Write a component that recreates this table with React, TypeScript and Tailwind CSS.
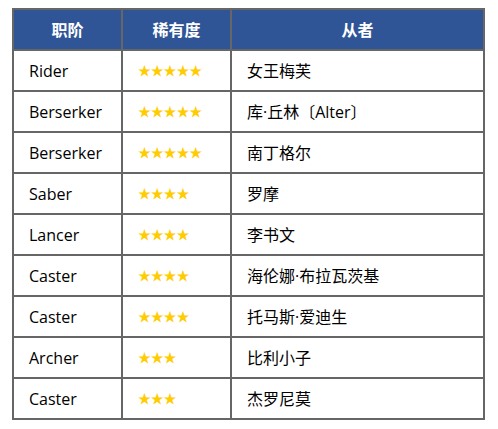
const rows = [
  { cls: 'Rider', stars: 5, name: '女王梅芙' },
  { cls: 'Berserker', stars: 5, name: '库·丘林〔Alter〕' },
  { cls: 'Berserker', stars: 5, name: '南丁格尔' },
  { cls: 'Saber', stars: 4, name: '罗摩' },
  { cls: 'Lancer', stars: 4, name: '李书文' },
  { cls: 'Caster', stars: 4, name: '海伦娜·布拉瓦茨基' },
  { cls: 'Caster', stars: 4, name: '托马斯·爱迪生' },
  { cls: 'Archer', stars: 3, name: '比利小子' },
  { cls: 'Caster', stars: 3, name: '杰罗尼莫' },
];

const font = "font-['Open_Sans','Noto_Sans_CJK_SC',sans-serif]";

const App = () => {
  return (
    <div className={`min-h-screen bg-white pl-[12px] pt-[8px] ${font}`}>
      <div className="grid w-[473px] grid-cols-[107px_107px_251px] gap-[2px] bg-[#666666] p-[2px]">
        {['职阶', '稀有度', '从者'].map((h) => (
          <div
            key={h}
            className="flex h-[39px] items-center justify-center bg-[#2f5597] text-[16px] font-bold text-white"
          >
            {h}
          </div>
        ))}
        {rows.map((r, i) => (
          <div key={i} className="contents">
            <div className="flex h-[39px] items-center bg-white pl-[15px] text-[16px] text-black">
              {r.cls}
            </div>
            <div className="flex h-[39px] items-center bg-white pl-[15px] text-[13px] tracking-[-0.2px] text-[#ffcc00]">
              {'★'.repeat(r.stars)}
            </div>
            <div className="flex h-[39px] items-center bg-white pl-[15px] text-[16px] text-black">
              {r.name}
            </div>
          </div>
        ))}
      </div>
    </div>
  );
};

export default App;
